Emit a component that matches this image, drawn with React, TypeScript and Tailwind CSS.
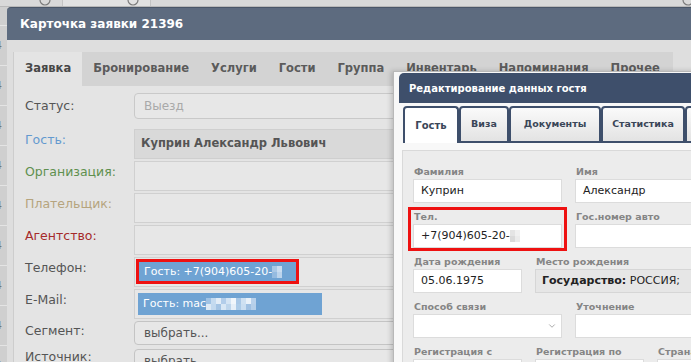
import React from 'react';
import { ChevronDown } from 'lucide-react';

// pixelated blur blocks (privacy mosaic in the screenshot)
const PHONE_BLUR = ['#a9c8e6', '#c9ddf1', '#95bbe0', '#bcd4ec'];
const EMAIL_BLUR = [
  '#9fc2e4', '#c5dbf0', '#e3edf7', '#b2cdea', '#d4e4f4', '#f1f6fb', '#a8c7e6', '#cfe1f2', '#e9f1f9', '#b8d1eb', '#dce9f5', '#c2d9ef', '#a4c4e4', '#d8e7f5', '#bdd5ec', '#e6eff8', '#accbe8', '#cadef1', '#9fc0e2', '#b5cfe9',
];
const MODAL_BLUR = ['#e4e4e4', '#f0f0f0', '#dadada', '#ebebeb'];

const Mosaic = ({ colors, cols }: { colors: string[]; cols: number }) => (
  <span className="inline-grid" style={{ gridTemplateColumns: `repeat(${cols}, 5px)` }}>
    {colors.map((c, i) => (
      <span key={i} className="w-[5px] h-[6px]" style={{ background: c }} />
    ))}
  </span>
);

const Backdrop = () => (
  <>
    <div className="h-[7px] shrink-0 bg-[#d9d9d9] border-b border-[#b9b9b9] flex">
      <div className="w-[63px] border-r border-[#c4c4c4]" />
      <div className="w-[88px] bg-[#e2e2e2] border-r border-[#c4c4c4]" />
    </div>
    <svg className="absolute left-0 top-0" width="691" height="8">
      <circle cx="45" cy="0" r="5" fill="none" stroke="#7a7a7a" strokeWidth="1.2" />
      <circle cx="133" cy="0" r="5" fill="none" stroke="#7a7a7a" strokeWidth="1.2" />
      <circle cx="688" cy="0" r="5" fill="none" stroke="#7a7a7a" strokeWidth="1.2" />
    </svg>
  </>
);

const LeftStrip = () => (
  <div className="w-[7px] shrink-0 bg-[#cfcfcf] flex flex-col pt-[18px] overflow-hidden">
    {[0, 1, 2, 3, 4, 5, 6, 7, 8].map((i) => (
      <div key={i} className="h-[40px] shrink-0 border-t border-[#e4e4e4] flex items-center">
        <span className="-ml-[5px] text-[11px] text-[#777] leading-none">4</span>
      </div>
    ))}
  </div>
);

const tabs = ['Заявка', 'Бронирование', 'Услуги', 'Гости', 'Группа', 'Инвентарь', 'Напоминания', 'Прочее'];

const OrderCard = () => (
  <div className="w-[700px] shrink-0 flex flex-col overflow-hidden">
    <div className="h-[33px] shrink-0 bg-[#5d6b7f] border-t border-[#4a5668] rounded-tl-[4px] flex items-center pl-[13px]">
      <span className="text-white font-bold text-[12px]">Карточка заявки 21396</span>
    </div>
    <div className="flex-1 bg-[#dedede] pl-[6px] pt-[12px] overflow-hidden">
      <div className="w-[660px] h-[400px] bg-[#e4e4e4] border-l border-[#cdcdcd] flex flex-col">
        <div className="h-[34px] shrink-0 bg-[#d3d3d3] flex">
          {tabs.map((t, i) => (
            <div
              key={t}
              className={
                i === 0
                  ? 'px-[11px] flex items-center bg-[#e4e4e4] text-[11.5px] font-bold text-[#474747]'
                  : 'px-[11px] flex items-center text-[11.5px] font-bold text-[#5b5b5b]'
              }
            >
              {t}
            </div>
          ))}
        </div>

        <div className="pl-[11px] pt-[7px] flex flex-col text-[12.5px] shrink-0">
          <div className="flex h-[26px] shrink-0">
            <div className="w-[109px] pt-[5px] leading-[16px] text-[#555]">Статус:</div>
            <div className="w-[320px] rounded-[4px] border border-[#c9c9c9] bg-[#e7e7e7] flex items-center pl-[9px] text-[12px] text-[#a9a9a9]">
              Выезд
            </div>
          </div>

          <div className="flex h-[30px] mt-[10px] shrink-0">
            <div className="w-[109px] pt-[3px] leading-[16px] text-[#6399cf]">Гость:</div>
            <div className="w-[320px] border border-[#cfcfcf] bg-[#d9d9d9] flex items-center pl-[6px] text-[11.5px] font-bold text-[#555]">
              Куприн Александр Львович
            </div>
          </div>

          <div className="flex h-[30px] mt-[2px] shrink-0">
            <div className="w-[109px] pt-[3px] leading-[16px] text-[#5f904f]">Организация:</div>
            <div className="w-[320px] border border-[#d0d0d0] bg-[#e7e7e7]" />
          </div>

          <div className="flex h-[30px] mt-[2px] shrink-0">
            <div className="w-[109px] pt-[3px] leading-[16px] text-[#b6a47e]">Плательщик:</div>
            <div className="w-[320px] border border-[#d0d0d0] bg-[#e7e7e7]" />
          </div>

          <div className="flex h-[30px] mt-[2px] shrink-0">
            <div className="w-[109px] pt-[3px] leading-[16px] text-[#a52a2a]">Агентство:</div>
            <div className="w-[320px] border border-[#d0d0d0] bg-[#e7e7e7]" />
          </div>

          <div className="flex h-[30px] mt-[2px] shrink-0">
            <div className="w-[109px] pt-[3px] leading-[16px] text-[#555]">Телефон:</div>
            <div className="w-[320px] border border-[#d0d0d0] bg-[#e7e7e7] pl-[4px] pt-[3px]">
              <div className="w-[158px] h-[22px] bg-[#6fa3d3] flex items-center pl-[5px] text-[11px] text-white">
                Гость: +7(904)605-20-
                <Mosaic colors={PHONE_BLUR} cols={2} />
              </div>
            </div>
          </div>

          <div className="flex h-[30px] mt-[2px] shrink-0">
            <div className="w-[109px] pt-[3px] leading-[16px] text-[#555]">E-Mail:</div>
            <div className="w-[320px] border border-[#d0d0d0] bg-[#e7e7e7] pl-[3px] pt-[3px]">
              <div className="w-[184px] h-[22px] bg-[#6fa3d3] flex items-center pl-[5px] text-[11px] text-white">
                Гость: mac
                <Mosaic colors={EMAIL_BLUR} cols={10} />
              </div>
            </div>
          </div>

          <div className="flex h-[24px] mt-[2px] shrink-0">
            <div className="w-[109px] pt-[2px] leading-[16px] text-[#555]">Сегмент:</div>
            <div className="w-[320px] rounded-[4px] border border-[#c4c4c4] bg-[#e7e7e7] flex items-center pl-[9px] text-[12px] text-[#555]">
              выбрать...
            </div>
          </div>

          <div className="flex h-[24px] mt-[4px] shrink-0">
            <div className="w-[109px] pt-[0px] leading-[16px] text-[#555]">Источник:</div>
            <div className="w-[320px] rounded-[4px] border border-[#c4c4c4] bg-[#e7e7e7] flex items-center pl-[9px] text-[12px] text-[#555]">
              выбрать...
            </div>
          </div>
        </div>
      </div>
    </div>
  </div>
);

const Field = ({ label, w, children, grey }: { label: string; w: string; children?: React.ReactNode; grey?: boolean }) => (
  <div className={`flex flex-col shrink-0 ${w}`}>
    <div className="h-[14px] leading-[14px] pl-[1px] text-[9.5px] font-bold text-[#858585] whitespace-nowrap">{label}</div>
    <div
      className={
        grey
          ? 'h-[24px] bg-[#e6e6e6] border border-[#d6d6d6] flex items-center pl-[6px] text-[11px] text-[#222] whitespace-nowrap'
          : 'h-[24px] bg-white border border-[#dcdcdc] flex items-center pl-[7px] text-[11px] text-[#222] whitespace-nowrap'
      }
    >
      {children}
    </div>
  </div>
);

const modalTabs = [
  { t: 'Гость', w: 'w-[56px]', active: true },
  { t: 'Виза', w: 'w-[50px]' },
  { t: 'Документы', w: 'w-[92px]' },
  { t: 'Статистика', w: 'w-[84px]' },
  { t: 'Платежи', w: 'w-[80px]' },
];

const GuestModal = () => (
  <div className="absolute left-[393px] top-[71px] w-[330px] h-[300px] bg-[#f8f8f8] border-l border-t border-[#b8b8b8] shadow-[-2px_0_5px_rgba(0,0,0,0.18)] pl-[5px] pt-[1px]">
    <div className="h-[30px] bg-[#3e4f6b] rounded-tl-[5px] flex items-center pl-[10px] text-white font-bold text-[10px]">
      Редактирование данных гостя
    </div>
    <div className="flex ml-[4px] mt-[3px] h-[37px]">
      {modalTabs.map((tab) => (
        <div
          key={tab.t}
          className={
            tab.active
              ? `${tab.w} shrink-0 rounded-t-[4px] border-2 border-b-0 border-[#3e4f6b] bg-white flex items-center justify-center text-[10px] font-bold text-[#3a4658]`
              : `${tab.w} shrink-0 rounded-t-[4px] border-2 border-[#3e4f6b] bg-gradient-to-b from-[#fafafa] to-[#e3e3e3] flex items-center justify-center text-[9.5px] font-bold text-[#3a4658]`
          }
        >
          {tab.t}
        </div>
      ))}
    </div>
    <div className="ml-[3px] mt-[7px] bg-[#ececec] border border-[#d9d9d9] pl-[10px] pt-[14px] flex flex-col gap-[7px] h-[250px]">
      <div className="flex gap-[13px]">
        <Field label="Фамилия" w="w-[149px]">Куприн</Field>
        <Field label="Имя" w="w-[160px]">Александр</Field>
      </div>
      <div className="flex gap-[13px]">
        <Field label="Тел." w="w-[149px]">
          +7(904)605-20-
          <Mosaic colors={MODAL_BLUR} cols={2} />
        </Field>
        <Field label="Гос.номер авто" w="w-[160px]" />
      </div>
      <div className="flex gap-[13px]">
        <Field label="Дата рождения" w="w-[109px]">05.06.1975</Field>
        <Field label="Место рождения" w="w-[200px]" grey>
          <b>Государство:</b>&nbsp;РОССИЯ;
        </Field>
      </div>
      <div className="flex gap-[13px]">
        <Field label="Способ связи" w="w-[149px]">
          <span className="flex-1" />
          <ChevronDown size={10} strokeWidth={1.5} className="mr-[4px] text-[#777]" />
        </Field>
        <Field label="Уточнение" w="w-[160px]" />
      </div>
      <div className="flex gap-[13px]">
        <Field label="Регистрация с" w="w-[109px]" />
        <Field label="Регистрация по" w="w-[109px]" />
        <Field label="Страна" w="w-[109px]" />
      </div>
    </div>
  </div>
);

export default function App() {
  return (
    <div className="relative w-[691px] h-[362px] overflow-hidden bg-[#d4d4d4] font-['DejaVu_Sans',Verdana,sans-serif]">
      <Backdrop />
      <div className="flex h-[355px]">
        <LeftStrip />
        <OrderCard />
      </div>
      <GuestModal />
      {/* red annotation frames */}
      <div className="absolute left-[136px] top-[259px] w-[163px] h-[25px] border-[3px] border-[#ee1111]" />
      <div className="absolute left-[408px] top-[207px] w-[159px] h-[44px] border-[3px] border-[#ee1111]" />
    </div>
  );
}
